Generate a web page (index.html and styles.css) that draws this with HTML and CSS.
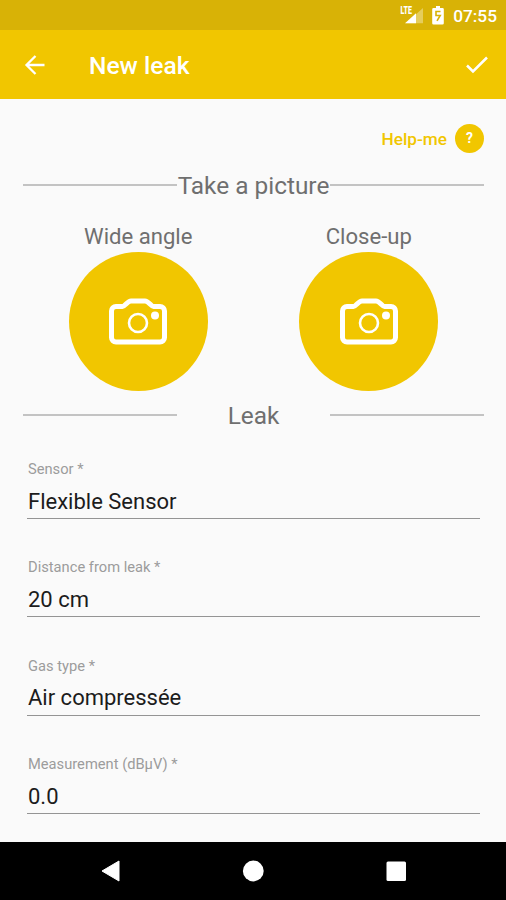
FILE: index.html
```
<!DOCTYPE html>
<html lang="en">
<head>
    <meta charset="UTF-8">
    <meta name="viewport" content="width=device-width, initial-scale=1.0">
    <title>New leak</title>
    <link rel="stylesheet" href="styles.css">
</head>
<body>
    <div class="status-bar">
        <svg class="signal-icon" width="24" height="20" viewBox="0 0 24 20">
            <path d="M23 3v15.300H6z" fill="#fff" opacity="0.35"/>
            <path d="M16 8.300v10H5z" fill="#fff"/>
            <text class="lte" x="0.500" y="9" textLength="11.500" lengthAdjust="spacingAndGlyphs">LTE</text>
        </svg>
        <svg class="battery-icon" width="12" height="19" viewBox="0 0 12 19">
            <path d="M4 0h4v2h2.500a1.300 1.300 0 0 1 1.300 1.300v14A1.300 1.300 0 0 1 10.500 18.600h-9A1.300 1.300 0 0 1 .2 17.300v-14A1.300 1.300 0 0 1 1.500 2H4z" fill="#fff"/>
            <path d="M8.500 5.500H4v4h4.200L5 14.800" fill="none" stroke="#d8b206" stroke-width="1.600"/>
        </svg>
        <span class="time">07:55</span>
    </div>

    <header class="app-bar">
        <button class="icon-button" type="button" aria-label="Back">
            <svg width="22" height="22" viewBox="0 0 22 22" fill="none" stroke="#fff" stroke-width="2.300">
                <path d="M20.500 11H3M11.500 2 2.500 11l9 9"/>
            </svg>
        </button>
        <h1>New leak</h1>
        <button class="icon-button" type="button" aria-label="Save">
            <svg width="24" height="20" viewBox="0 0 24 20" fill="none" stroke="#fff" stroke-width="2.500">
                <path d="M2 10.500 8 16.500 22 2.500"/>
            </svg>
        </button>
    </header>

    <main class="content">
        <div class="help">
            <span>Help-me</span>
            <button class="help-button" type="button">?</button>
        </div>

        <div class="section-title">
            <span class="line"></span>
            <h2>Take a picture</h2>
            <span class="line"></span>
        </div>

        <div class="pictures">
            <div class="picture">
                <label>Wide angle</label>
                <button class="camera-button" type="button" aria-label="Wide angle picture">
                    <svg width="60" height="50" viewBox="0 0 60 50" fill="none" stroke="#fff">
                        <path d="M8 9.500H14.500c2.500 0 5-5.500 8.500-5.500h14c3.500 0 6 5.500 8.500 5.500H52a4.500 4.500 0 0 1 4.500 4.500v26.500A4.500 4.500 0 0 1 52 45H8a4.500 4.500 0 0 1-4.500-4.500V14A4.500 4.500 0 0 1 8 9.500z" stroke-width="5"/>
                        <circle cx="30" cy="26" r="9" stroke-width="2.600"/>
                        <circle cx="47" cy="18.500" r="4" fill="#fff" stroke="none"/>
                    </svg>
                </button>
            </div>
            <div class="picture">
                <label>Close-up</label>
                <button class="camera-button" type="button" aria-label="Close-up picture">
                    <svg width="60" height="50" viewBox="0 0 60 50" fill="none" stroke="#fff">
                        <path d="M8 9.500H14.500c2.500 0 5-5.500 8.500-5.500h14c3.500 0 6 5.500 8.500 5.500H52a4.500 4.500 0 0 1 4.500 4.500v26.500A4.500 4.500 0 0 1 52 45H8a4.500 4.500 0 0 1-4.500-4.500V14A4.500 4.500 0 0 1 8 9.500z" stroke-width="5"/>
                        <circle cx="30" cy="26" r="9" stroke-width="2.600"/>
                        <circle cx="47" cy="18.500" r="4" fill="#fff" stroke="none"/>
                    </svg>
                </button>
            </div>
        </div>

        <div class="section-title leak-title">
            <span class="line"></span>
            <h2>Leak</h2>
            <span class="line"></span>
        </div>

        <form id="leakForm">
            <div class="field">
                <label for="sensor">Sensor *</label>
                <input type="text" id="sensor" name="sensor" value="Flexible Sensor" required>
            </div>
            <div class="field">
                <label for="distance">Distance from leak *</label>
                <input type="text" id="distance" name="distance" value="20 cm" required>
            </div>
            <div class="field">
                <label for="gasType">Gas type *</label>
                <input type="text" id="gasType" name="gasType" value="Air compressée" required>
            </div>
            <div class="field">
                <label for="measurement">Measurement (dBµV) *</label>
                <input type="text" id="measurement" name="measurement" value="0.0" required>
            </div>
        </form>
    </main>

    <nav class="nav-bar">
        <svg width="20" height="22" viewBox="0 0 20 22"><path d="M19 1v20L2 11z" fill="#fff" stroke="#fff" stroke-linejoin="round"/></svg>
        <svg width="22" height="22" viewBox="0 0 22 22"><circle cx="11.300" cy="11" r="10.400" fill="#fff"/></svg>
        <svg width="20" height="20" viewBox="0 0 20 20"><rect x="0.500" y="0.500" width="19.500" height="19.500" rx="1.500" fill="#fff"/></svg>
    </nav>
</body>
</html>
```
FILE: styles.css
```
* {
    box-sizing: border-box;
}

body {
    font-family: Roboto, sans-serif;
    display: flex;
    flex-direction: column;
    height: 900px;
    margin: 0;
    background-color: #fafafa;
    overflow: hidden;
}

button {
    display: flex;
    align-items: center;
    justify-content: center;
    padding: 0;
    border: none;
    background: none;
    font-family: inherit;
    cursor: pointer;
}

h1, h2 {
    margin: 0;
}

.status-bar {
    display: flex;
    align-items: center;
    justify-content: flex-end;
    flex: none;
    height: 30px;
    padding-right: 9px;
    background-color: #d8b206;
    color: #fff;
}

.lte {
    font-size: 10.5px;
    font-weight: 900;
    fill: #fff;
}

.battery-icon {
    margin: 0 9px 0 8px;
}

.time {
    font-size: 17.3px;
    font-weight: 500;
    line-height: 30px;
    padding-top: 2px;
}

.app-bar {
    display: flex;
    align-items: center;
    flex: none;
    height: 69px;
    padding: 0 17px 0 24px;
    background-color: #f1c600;
    color: #fff;
}

.app-bar h1 {
    flex: 1;
    margin-left: 43px;
    font-size: 24.6px;
    font-weight: 500;
    line-height: 30px;
    padding-top: 2px;
}

.content {
    flex: 1;
    min-height: 0;
    padding: 24px 22px 0 23px;
    overflow: hidden;
}

.help {
    display: flex;
    align-items: center;
    justify-content: flex-end;
    gap: 8px;
    height: 30px;
    color: #f1c600;
    font-size: 17.2px;
    font-weight: 500;
    line-height: 30px;
}

.help span {
    padding-top: 2px;
}

.help-button {
    width: 29px;
    height: 29px;
    border-radius: 50%;
    background-color: #f1c600;
    color: #fff;
    font-size: 14px;
    font-weight: 700;
}

.section-title {
    display: grid;
    grid-template-columns: 1fr 1fr 1fr;
    align-items: center;
    height: 30px;
    margin-top: 16px;
    color: #6f6f6f;
}

.section-title h2 {
    justify-self: center;
    padding-top: 2px;
    font-size: 24.4px;
    font-weight: 400;
    line-height: 30px;
    white-space: nowrap;
}

.line {
    height: 2px;
    background-color: #c3c3c3;
}

.pictures {
    display: grid;
    grid-template-columns: 1fr 1fr;
    margin-top: 22px;
}

.picture {
    display: flex;
    flex-direction: column;
    align-items: center;
    color: #6f6f6f;
    font-size: 22.1px;
    line-height: 30px;
}

.camera-button {
    width: 139px;
    height: 139px;
    margin-top: 1px;
    border-radius: 50%;
    background-color: #f1c600;
}

.leak-title {
    margin-top: 8px;
}

#leakForm {
    margin: 29px 4px 0;
}

.field {
    display: flex;
    flex-direction: column;
    height: 98.4px;
}

.field label {
    padding: 1px 0 0 1px;
    color: #9c9c9c;
    font-size: 14.7px;
    line-height: 20px;
}

.field input {
    height: 40px;
    padding: 5px 0 0 1px;
    border: none;
    border-bottom: 1.5px solid #949494;
    background: none;
    color: #1c1c1c;
    font-family: inherit;
    font-size: 22px;
    outline: none;
}

.nav-bar {
    display: grid;
    grid-template-columns: 143px 143px 143px;
    justify-content: center;
    justify-items: center;
    align-items: center;
    flex: none;
    height: 58px;
    background-color: #000;
}
```
